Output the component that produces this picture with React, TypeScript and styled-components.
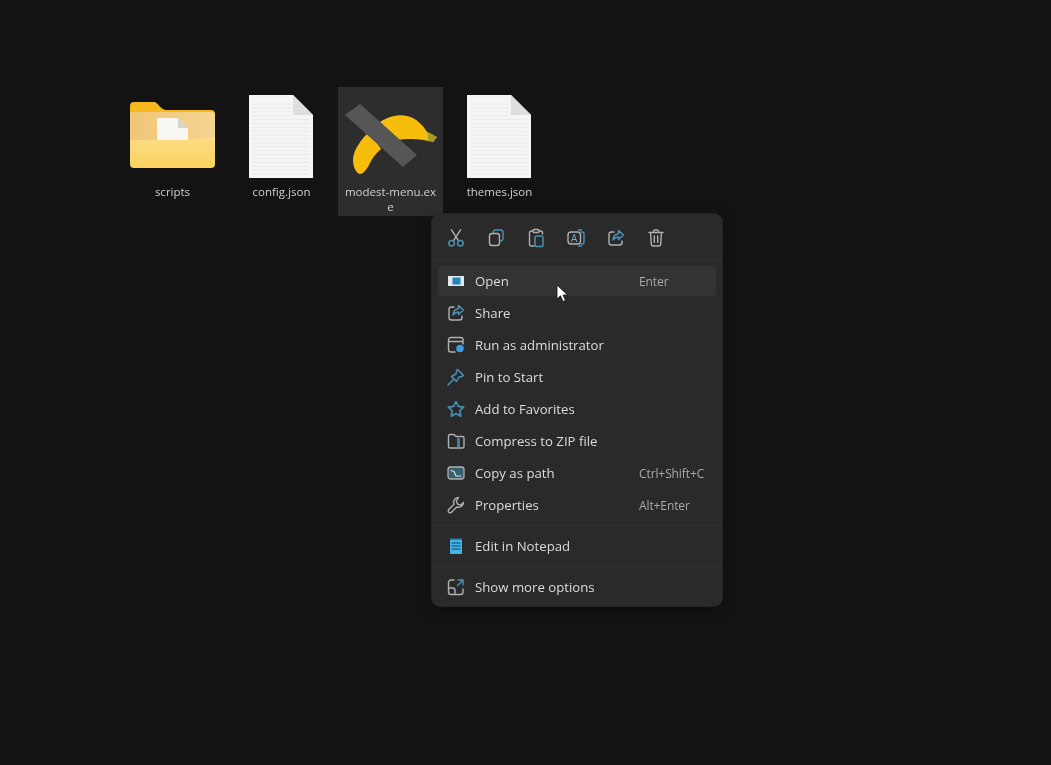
import React from "react";
import styled, { createGlobalStyle } from "styled-components";

const Global = createGlobalStyle`
  html, body { margin: 0; padding: 0; background: #131313; }
  #root { width: 1051px; height: 765px; overflow: hidden; }
`;

const Desktop = styled.div`
  position: relative;
  width: 1051px;
  height: 765px;
  box-sizing: border-box;
  padding: 87px 0 0 120px;
  background: #131313;
  font-family: "Open Sans", "Noto Sans", sans-serif;
`;

const FileGrid = styled.div`
  display: flex;
  gap: 4px;
  align-items: flex-start;
`;

const Tile = styled.div<{ $selected?: boolean }>`
  width: 105px;
  height: 129px;
  display: flex;
  flex-direction: column;
  align-items: center;
  background: ${(p) => (p.$selected ? "#2d2d2d" : "transparent")};
`;

const TileArt = styled.svg`
  display: block;
  width: 105px;
  height: 97px;
  flex: none;
  filter: blur(0.7px);
`;

const TileLabel = styled.div`
  width: 94px;
  font-size: 11.5px;
  line-height: 15px;
  text-align: center;
  color: #cfcfcf;
  word-break: break-all;
  filter: blur(0.35px);
`;

const Menu = styled.div`
  position: absolute;
  left: 432px;
  top: 214px;
  width: 290px;
  height: 392px;
  box-sizing: border-box;
  background: #2a2a2a;
  border-radius: 8px;
  box-shadow: 0 0 0 1px #252525, 0 4px 14px rgba(0, 0, 0, 0.35);
`;

const Toolbar = styled.div`
  height: 46px;
  display: flex;
  align-items: center;
  gap: 20px;
  padding: 2px 0 0 14px;
  box-sizing: border-box;
`;

const ToolIcon = styled.svg`
  display: block;
  width: 20px;
  height: 20px;
  flex: none;
  filter: blur(0.5px);
`;

const Divider = styled.div`
  height: 1px;
  background: #313131;
`;

const Items = styled.div`
  padding: 5px 6px 0;
  display: flex;
  flex-direction: column;
  gap: 2px;
`;

const Row = styled.div<{ $active?: boolean }>`
  height: 30px;
  display: grid;
  grid-template-columns: 20px 155px 1fr;
  column-gap: 9px;
  align-items: center;
  padding-left: 8px;
  border-radius: 4px;
  background: ${(p) => (p.$active ? "#333333" : "transparent")};
`;

const RowLabel = styled.span`
  font-size: 13.2px;
  color: #dcdcdc;
  white-space: nowrap;
  filter: blur(0.35px);
`;

const Shortcut = styled.span`
  font-size: 12px;
  letter-spacing: -0.1px;
  color: #a9a9a9;
  white-space: nowrap;
  filter: blur(0.35px);
`;

const SectionRule = styled(Divider)`
  margin: 5px 0;
`;

const Section = styled.div`
  padding: 0 6px;
`;

const Cursor = styled.svg`
  position: absolute;
  left: 556px;
  top: 284px;
  width: 13px;
  height: 19px;
`;

const G = "#b0b0b0";
const B = "#4a92b3";

const Line: React.FC<{ d: string; c?: string; w?: number }> = ({ d, c = G, w = 1.4 }) => (
  <path d={d} fill="none" stroke={c} strokeWidth={w} strokeLinecap="round" strokeLinejoin="round" />
);

const icons: Record<string, React.ReactNode> = {
  cut: (
    <>
      <Line d="M7.600 12.600 14.500 1.800M12.400 12.600 5.500 1.800" />
      <circle cx="5.600" cy="15.200" r="2.800" fill="none" stroke={B} strokeWidth="1.500" />
      <circle cx="14.400" cy="15.200" r="2.800" fill="none" stroke={B} strokeWidth="1.500" />
    </>
  ),
  copy: (
    <>
      <Line d="M7 5V4.500A2.500 2.500 0 0 1 9.500 2h5A2.500 2.500 0 0 1 17 4.500v6a2.500 2.500 0 0 1-2.500 2.500H14" c={B} />
      <rect x="3.500" y="5.500" width="10" height="12" rx="2.500" fill="none" stroke={G} strokeWidth="1.400" />
    </>
  ),
  paste: (
    <>
      <Line d="M8 18H5.500A2 2 0 0 1 3.500 16V5A2 2 0 0 1 5.500 3H7M13 3h1.500a2 2 0 0 1 2 2v1" />
      <rect x="7" y="1.500" width="6" height="3" rx="1" fill="none" stroke={G} strokeWidth="1.300" />
      <rect x="9" y="8" width="8" height="10.500" rx="1.800" fill="none" stroke={B} strokeWidth="1.500" />
    </>
  ),
  rename: (
    <>
      <rect x="2" y="4" width="12.500" height="12" rx="3" fill="none" stroke={G} strokeWidth="1.400" />
      <Line d="M15 4h1a2 2 0 0 1 2 2v8a2 2 0 0 1-2 2h-1M12.500 2h3M12.500 18h3" c={B} />
      <text x="8.200" y="13.600" fontSize="10" fontFamily="Open Sans, sans-serif" fill="#6fb2d1" textAnchor="middle">A</text>
    </>
  ),
  share: (
    <>
      <Line d="M8 4H5.500A2.500 2.500 0 0 0 3 6.500v8A2.500 2.500 0 0 0 5.500 17h8a2.500 2.500 0 0 0 2.500-2.500V13" />
      <Line d="M12.500 2.500 17.500 7l-5 4.500V9C10 9 8.400 10 7 12c.2-3.500 2.200-6 5.500-6.300z" c={B} w={1.500} />
    </>
  ),
  trash: (
    <>
      <Line d="M3 4.500h14M7.500 4.500V3.500A1.500 1.500 0 0 1 9 2h2a1.500 1.500 0 0 1 1.500 1.500v1M4.500 4.500l.8 11.500a2 2 0 0 0 2 2h5.400a2 2 0 0 0 2-2l.8-11.500" />
      <Line d="M8.300 8v6.500M11.700 8v6.500" />
    </>
  ),
  open: (
    <>
      <rect x="2" y="5" width="16" height="10" fill="#e4eaec" />
      <rect x="6.500" y="6.500" width="8" height="7" fill="#1f86bf" />
    </>
  ),
  admin: (
    <>
      <Line d="M9 17H5A2.500 2.500 0 0 1 2.500 14.500V5A2.500 2.500 0 0 1 5 2.500H14.500A2.500 2.500 0 0 1 17 5V9M2.500 6.500H17" />
      <circle cx="14" cy="13.500" r="3.800" fill="#3d9be0" />
    </>
  ),
  pin: <Line c={B} w={1.500} d="M2 18 7.500 12.500M11.500 2.500 17.500 8.500 16 9.500 13 10 10.500 14.500 5.500 9.500 10 7 10.500 4z" />,
  star: (
    <path
      d="M10 2.500 12.300 7.400 17.700 8.100 13.700 11.800 14.800 17.200 10 14.500 5.200 17.200 6.300 11.800 2.300 8.100 7.700 7.400Z"
      fill="none"
      stroke={B}
      strokeWidth="1.600"
      strokeLinejoin="round"
    />
  ),
  zip: (
    <>
      <Line d="M2.500 15.500V5A1.500 1.500 0 0 1 4 3.500H8L10 5.500H16.500A1.500 1.500 0 0 1 18 7V15.500A1.500 1.500 0 0 1 16.500 17H4A1.500 1.500 0 0 1 2.500 15.500Z" />
      <rect x="11" y="7" width="3" height="9.500" fill={B} opacity="0.8" />
    </>
  ),
  path: (
    <>
      <rect x="2" y="4" width="16" height="12" rx="2.500" fill="#37606f" stroke={G} strokeWidth="1.300" />
      <Line d="M5 7.500 8 8.500 10 13H15" c="#cfe6f0" w={1.200} />
    </>
  ),
  wrench: (
    <Line d="M12.500 2.500A5 5 0 0 0 8 9.300L2.500 14.800A2 2 0 0 0 5.200 17.500L10.700 12A5 5 0 0 0 17.500 7.500L14.500 10.200 11.500 9 10.300 6 12.500 2.500Z" />
  ),
  notepad: (
    <>
      <rect x="4" y="3" width="12" height="15" fill="#45b4e6" />
      <path d="M4 2.500h12v1.500H4z" fill="#2a7fb0" />
      <Line d="M6 7h8M6 10h8M6 13h8" c="#10486a" w={1.200} />
    </>
  ),
  more: (
    <>
      <Line d="M8 3H5A2.500 2.500 0 0 0 2.500 5.500V15A2.500 2.500 0 0 0 5 17.500H14.500A2.500 2.500 0 0 0 17 15V12M2.500 11H6.500A2.500 2.500 0 0 1 9 13.500V17.500" />
      <Line d="M12 3H17V8M17 3 11.500 8.500" c={B} />
    </>
  ),
};

const Icon: React.FC<{ name: string }> = ({ name }) => (
  <ToolIcon viewBox="0 0 20 20">{icons[name]}</ToolIcon>
);

const docLines = Array.from({ length: 19 }, (_, i) => 17 + i * 3.9);

const DocArt: React.FC = () => (
  <TileArt viewBox="0 0 105 97">
    <path d="M20 8H64L84 28V91H20Z" fill="#f5f5f5" />
    {docLines.map((y) => (
      <path key={y} d={`M24 ${y}H${y < 30 ? 62 : 80}`} stroke="#eaeaea" strokeWidth="1" />
    ))}
    <path d="M64 8V28H84Z" fill="#dedede" />
  </TileArt>
);

const FolderArt: React.FC = () => (
  <TileArt viewBox="0 0 105 97">
    <defs>
      <linearGradient id="folderBack" x1="0" x2="1" y1="0" y2="0">
        <stop offset="0" stopColor="#efc676" />
        <stop offset="1" stopColor="#f5d592" />
      </linearGradient>
      <linearGradient id="folderFront" x1="0" x2="0" y1="0" y2="1">
        <stop offset="0" stopColor="#fcdd86" />
        <stop offset="1" stopColor="#fdd35c" />
      </linearGradient>
    </defs>
    <path d="M10 19A4 4 0 0 1 14 15H34C38 15 40 23 47 23H91A4 4 0 0 1 95 27V40H10Z" fill="#f6b81f" />
    <path d="M10 25H92A3 3 0 0 1 95 28V60H10Z" fill="url(#folderBack)" />
    <path d="M37 31H58L68 41V58H37Z" fill="#f8f7f3" />
    <path d="M58 31V41H68Z" fill="#d8d4c8" />
    <path d="M10 53H68L95 50V77A4 4 0 0 1 91 81H14A4 4 0 0 1 10 77Z" fill="url(#folderFront)" />
  </TileArt>
);

const BananaArt: React.FC = () => (
  <TileArt viewBox="0 0 105 97">
    <path d="M42 35C50 30 60 27 69 29 78 31 85 38 89 45L99 50 95 55C88 53 80 52 74 52 68 52 64 52 60 53Z" fill="#f7bd0c" />
    <path d="M90 45 99 50 95 55 90 53Z" fill="#a49a26" />
    <path d="M29 47C21 55 15 65 15 73 15 80 18 86 22 87 25 87 27 84 30 80 33 73 37 67 43 62L33 47Z" fill="#f7bd0c" />
    <path d="M7 28 22 17 79 68 65 80Z" fill="#565656" />
  </TileArt>
);

const rows: { icon: string; label: string; key?: string; active?: boolean }[] = [
  { icon: "open", label: "Open", key: "Enter", active: true },
  { icon: "share", label: "Share" },
  { icon: "admin", label: "Run as administrator" },
  { icon: "pin", label: "Pin to Start" },
  { icon: "star", label: "Add to Favorites" },
  { icon: "zip", label: "Compress to ZIP file" },
  { icon: "path", label: "Copy as path", key: "Ctrl+Shift+C" },
  { icon: "wrench", label: "Properties", key: "Alt+Enter" },
];

const MenuRow: React.FC<{ icon: string; label: string; shortcut?: string; active?: boolean }> = ({
  icon,
  label,
  shortcut,
  active,
}) => (
  <Row $active={active}>
    <Icon name={icon} />
    <RowLabel>{label}</RowLabel>
    {shortcut && <Shortcut>{shortcut}</Shortcut>}
  </Row>
);

export default function App() {
  return (
    <Desktop>
      <Global />
      <FileGrid>
        <Tile>
          <FolderArt />
          <TileLabel>scripts</TileLabel>
        </Tile>
        <Tile>
          <DocArt />
          <TileLabel>config.json</TileLabel>
        </Tile>
        <Tile $selected>
          <BananaArt />
          <TileLabel>modest-menu.exe</TileLabel>
        </Tile>
        <Tile>
          <DocArt />
          <TileLabel>themes.json</TileLabel>
        </Tile>
      </FileGrid>
      <Menu>
        <Toolbar>
          {["cut", "copy", "paste", "rename", "share", "trash"].map((n) => (
            <Icon key={n} name={n} />
          ))}
        </Toolbar>
        <Divider />
        <Items>
          {rows.map((r) => (
            <MenuRow key={r.label} icon={r.icon} label={r.label} shortcut={r.key} active={r.active} />
          ))}
        </Items>
        <SectionRule />
        <Section>
          <MenuRow icon="notepad" label="Edit in Notepad" />
        </Section>
        <SectionRule />
        <Section>
          <MenuRow icon="more" label="Show more options" />
        </Section>
      </Menu>
      <Cursor viewBox="0 0 13 19">
        <path d="M1 1V15L4.500 11.800 7 17.500 9.500 16.400 7 11H11.500Z" fill="#fff" stroke="#111" strokeWidth="0.8" />
      </Cursor>
    </Desktop>
  );
}
